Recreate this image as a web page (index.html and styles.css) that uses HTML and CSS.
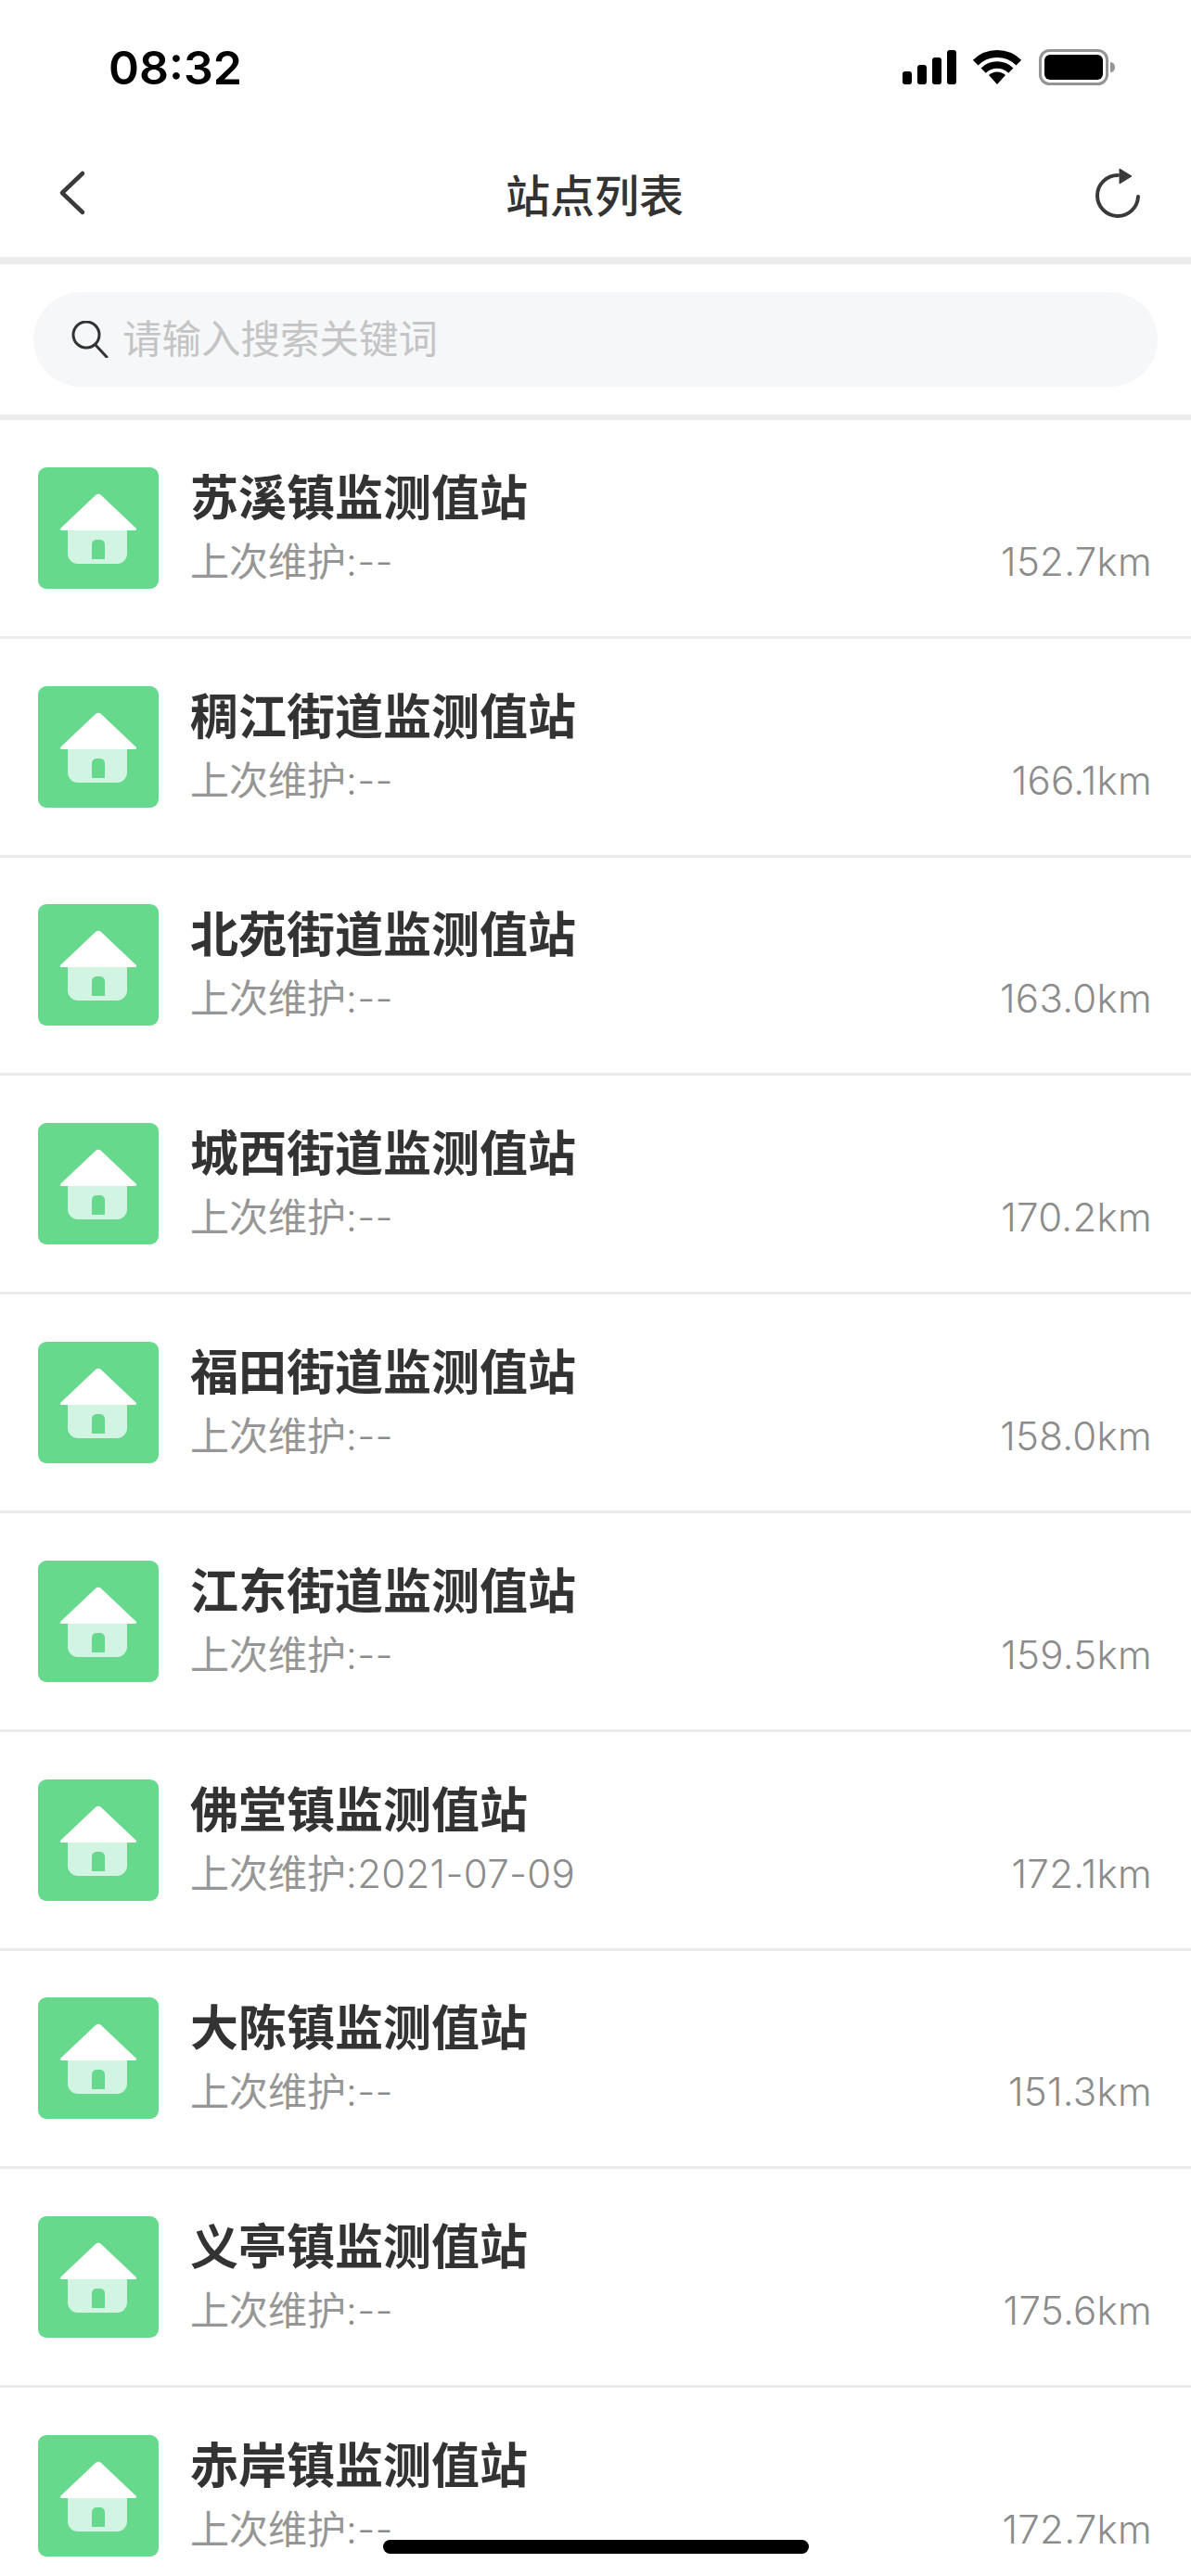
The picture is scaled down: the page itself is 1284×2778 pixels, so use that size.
FILE: index.html
```html
<!DOCTYPE html>
<html lang="zh-CN">
<head>
    <meta charset="UTF-8">
    <meta name="viewport" content="width=device-width, initial-scale=1.0">
    <title>站点列表</title>
    <link rel="stylesheet" href="styles.css">
</head>
<body>
    <!-- House icon, reused by every row -->
    <svg class="defs" width="0" height="0">
        <symbol id="house" viewBox="0 0 130 131">
            <rect width="130" height="131" rx="9" fill="#66d98c"/>
            <path d="M32 66h64v27a11 11 0 0 1-11 11H43a11 11 0 0 1-11-11z" fill="#d2f5e3"/>
            <path d="M58 83a5 5 0 0 1 5-5h4a5 5 0 0 1 5 5v16H58z" fill="#66d98c"/>
            <path d="M62 30a4 4 0 0 1 6 0l38 36a1.500 1.500 0 0 1-1 2H25a1.500 1.500 0 0 1-1-2z" fill="#fff"/>
        </symbol>
    </svg>

    <div class="status-bar">
        <span class="time">08:32</span>
        <svg class="status-icons" width="230" height="41" viewBox="973 52 230 41">
            <rect x="973" y="77" width="10" height="14" rx="3"/>
            <rect x="989" y="70" width="10" height="21" rx="3"/>
            <rect x="1005" y="62" width="10" height="29" rx="3"/>
            <rect x="1021" y="54" width="10" height="37" rx="3"/>
            <path d="M1051.700 67.700a33 33 0 0 1 46.600 0" fill="none" stroke="#000" stroke-width="8"/>
            <path d="M1060.200 76.200a21 21 0 0 1 29.600 0" fill="none" stroke="#000" stroke-width="7.500"/>
            <path d="M1066 81a13 13 0 0 1 18 0l-9 10z"/>
            <rect x="1121.500" y="54.500" width="72" height="36" rx="10" fill="none" stroke="#949494" stroke-width="3"/>
            <rect x="1126" y="59" width="63" height="27" rx="6"/>
            <path d="M1197 67a5 5.500 0 0 1 0 11z" fill="#949494"/>
        </svg>
    </div>

    <div class="nav-bar">
        <svg class="nav-icon" width="30" height="50" viewBox="0 0 30 50">
            <path d="M26 4 4 25l22 21" fill="none" stroke="#3a3a3a" stroke-width="4.500" stroke-linecap="round" stroke-linejoin="round"/>
        </svg>
        <h1 class="nav-title">站点列表</h1>
        <svg class="nav-icon" width="50" height="54" viewBox="0 0 50 54">
            <path d="M25 8a22 22 0 1 0 22 23" fill="none" stroke="#3a3a3a" stroke-width="4" stroke-linecap="round"/>
            <path d="M27 1v16l13-8z" fill="#3a3a3a" stroke="#3a3a3a" stroke-width="1" stroke-linejoin="round"/>
        </svg>
    </div>

    <div class="search-wrap">
        <div class="search-box">
            <svg width="40" height="40" viewBox="0 0 40 40">
                <circle cx="16" cy="15" r="14" fill="none" stroke="#333" stroke-width="3"/>
                <path d="M26 26l12 13" fill="none" stroke="#333" stroke-width="3" stroke-linecap="round"/>
            </svg>
            <span class="search-hint">请输入搜索关键词</span>
        </div>
    </div>

    <div class="site-list">
        <div class="site-row">
            <svg class="site-icon"><use href="#house"/></svg>
            <div class="site-info">
                <div class="site-name">苏溪镇监测值站</div>
                <div class="site-meta"><span>上次维护<span class="num">:--</span></span><span class="num">152.7km</span></div>
            </div>
        </div>
        <div class="site-row">
            <svg class="site-icon"><use href="#house"/></svg>
            <div class="site-info">
                <div class="site-name">稠江街道监测值站</div>
                <div class="site-meta"><span>上次维护<span class="num">:--</span></span><span class="num">166.1km</span></div>
            </div>
        </div>
        <div class="site-row">
            <svg class="site-icon"><use href="#house"/></svg>
            <div class="site-info">
                <div class="site-name">北苑街道监测值站</div>
                <div class="site-meta"><span>上次维护<span class="num">:--</span></span><span class="num">163.0km</span></div>
            </div>
        </div>
        <div class="site-row">
            <svg class="site-icon"><use href="#house"/></svg>
            <div class="site-info">
                <div class="site-name">城西街道监测值站</div>
                <div class="site-meta"><span>上次维护<span class="num">:--</span></span><span class="num">170.2km</span></div>
            </div>
        </div>
        <div class="site-row">
            <svg class="site-icon"><use href="#house"/></svg>
            <div class="site-info">
                <div class="site-name">福田街道监测值站</div>
                <div class="site-meta"><span>上次维护<span class="num">:--</span></span><span class="num">158.0km</span></div>
            </div>
        </div>
        <div class="site-row">
            <svg class="site-icon"><use href="#house"/></svg>
            <div class="site-info">
                <div class="site-name">江东街道监测值站</div>
                <div class="site-meta"><span>上次维护<span class="num">:--</span></span><span class="num">159.5km</span></div>
            </div>
        </div>
        <div class="site-row">
            <svg class="site-icon"><use href="#house"/></svg>
            <div class="site-info">
                <div class="site-name">佛堂镇监测值站</div>
                <div class="site-meta"><span>上次维护<span class="num">:2021-07-09</span></span><span class="num">172.1km</span></div>
            </div>
        </div>
        <div class="site-row">
            <svg class="site-icon"><use href="#house"/></svg>
            <div class="site-info">
                <div class="site-name">大陈镇监测值站</div>
                <div class="site-meta"><span>上次维护<span class="num">:--</span></span><span class="num">151.3km</span></div>
            </div>
        </div>
        <div class="site-row">
            <svg class="site-icon"><use href="#house"/></svg>
            <div class="site-info">
                <div class="site-name">义亭镇监测值站</div>
                <div class="site-meta"><span>上次维护<span class="num">:--</span></span><span class="num">175.6km</span></div>
            </div>
        </div>
        <div class="site-row">
            <svg class="site-icon"><use href="#house"/></svg>
            <div class="site-info">
                <div class="site-name">赤岸镇监测值站</div>
                <div class="site-meta"><span>上次维护<span class="num">:--</span></span><span class="num">172.7km</span></div>
            </div>
        </div>
    </div>

    <div class="home-bar"></div>
</body>
</html>
```

FILE: styles.css
```css
html, body {
    margin: 0;
    height: 2778px;
    overflow: hidden;
    background-color: #fff;
}
body {
    position: relative;
    font-family: "Liberation Sans", "Noto Sans CJK SC", sans-serif;
    color: #333;
}
.defs {
    position: absolute;
}

/* top of the screen */
.status-bar {
    height: 144px;
    box-sizing: border-box;
    padding: 45px 81px 0 117px;
    display: flex;
    justify-content: space-between;
    align-items: flex-start;
}
.time {
    font-family: Inter, "Liberation Sans", sans-serif;
    font-size: 50px;
    line-height: 56px;
    font-weight: 600;
    color: #000;
}
.status-icons {
    margin-top: 7px;
}
.nav-bar {
    height: 127px;
    padding: 0 54px 6px 63px;
    display: flex;
    align-items: center;
    justify-content: space-between;
    border-bottom: 8px solid #ececec;
}
.nav-title {
    margin: 0 0 0 9px;
    font-size: 48px;
    font-weight: 500;
    color: #333;
}

/* search */
.search-wrap {
    padding: 30px 36px;
    border-bottom: 6px solid #ececec;
}
.search-box {
    height: 102px;
    box-sizing: border-box;
    padding-left: 41px;
    display: flex;
    align-items: center;
    gap: 15px;
    background-color: #f6f7f9;
    border-radius: 51px;
}
.search-hint {
    font-size: 42.500px;
    line-height: 104px;
    height: 102px;
    color: #c4c4c4;
}

/* station rows */
.site-row {
    height: 235.800px;
    box-sizing: border-box;
    padding: 0 42px 0 41px;
    display: flex;
    align-items: center;
    gap: 34px;
    border-bottom: 3px solid #ebebeb;
}
.site-icon {
    width: 130px;
    height: 131px;
    flex-shrink: 0;
}
.site-info {
    flex: 1;
    padding-top: 5px;
}
.site-name {
    font-size: 52px;
    line-height: 64px;
    font-weight: 700;
    color: #333;
}
.site-meta {
    margin-top: 5px;
    display: flex;
    justify-content: space-between;
    align-items: baseline;
    font-size: 42px;
    line-height: 62px;
    color: #969696;
}
/* digits and dashes sit in a wider latin face */
.num {
    font-family: Inter, "Liberation Sans", sans-serif;
    font-size: 42px;
    font-weight: 300;
    letter-spacing: 0.300px;
    color: #8c8c8c;
}

.home-bar {
    position: absolute;
    left: 413px;
    top: 2739px;
    width: 459px;
    height: 15px;
    border-radius: 8px;
    background-color: #000;
}
```
